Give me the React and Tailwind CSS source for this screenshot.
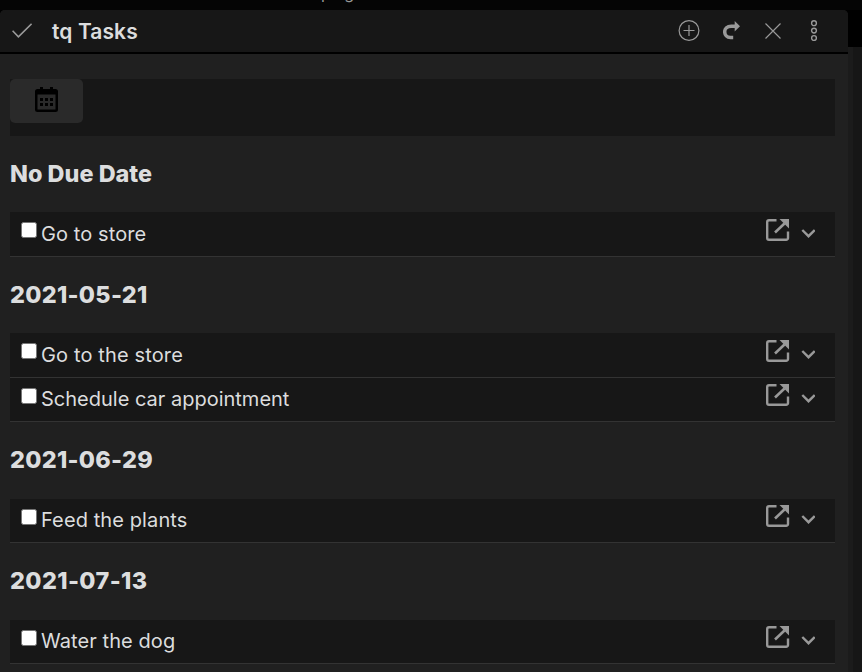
const groups = [
  { title: 'No Due Date', heading: 'h-[76px] tracking-[0.03px]', tasks: [{ name: 'Go to store', tall: true, tracking: 'tracking-[0.1px]' }] },
  {
    title: '2021-05-21',
    heading: 'h-[76px] tracking-[0.3px]',
    tasks: [
      { name: 'Go to the store', tall: true, tracking: 'tracking-[0.14px]' },
      { name: 'Schedule car appointment', tall: false, tracking: 'tracking-normal' },
    ],
  },
  { title: '2021-06-29', heading: 'h-[77px] tracking-[0.3px]', tasks: [{ name: 'Feed the plants', tall: false, tracking: 'tracking-[0.1px]' }] },
  { title: '2021-07-13', heading: 'h-[77px] tracking-[0.4px]', tasks: [{ name: 'Water the dog', tall: false, tracking: 'tracking-[0.08px]' }] },
];

function CheckIcon() {
  return (
    <svg className="ml-3 h-4 w-5 shrink-0" viewBox="0 0 20 16" fill="none" stroke="#999" strokeWidth="1.6">
      <path d="M0.6 7.8 6.4 13.800 19.6 0.800" />
    </svg>
  );
}

function HeaderActions() {
  return (
    <div className="ml-auto flex items-center text-[#999]">
      <svg className="h-[22px] w-[22px]" viewBox="0 0 22 22" fill="none" stroke="currentColor" strokeWidth="1.2">
        <circle cx="11" cy="10.500" r="9.9" />
        <path d="M11 5v11M5.500 10.500h11" />
      </svg>
      <svg className="ml-[23px] h-5 w-[18px]" viewBox="0 0 18 20" fill="none">
        <path d="M12 5.200H8.200C4.200 5.200 1.700 7.400 1.700 10.700c0 3.300 2.200 5.800 5.800 5.800h2.700" stroke="currentColor" strokeWidth="3.500" />
        <path d="M11.700 0v10.400l5.300-5.200z" fill="currentColor" />
      </svg>
      <svg className="ml-6 h-4 w-4" viewBox="0 0 16 16" fill="none" stroke="currentColor" strokeWidth="1.2">
        <path d="M0.500 0.500l15 15M15.500 0.500l-15 15" />
      </svg>
      <svg className="mr-[30px] ml-[29px] h-[22px] w-2" viewBox="0 0 8 22" fill="none" stroke="currentColor" strokeWidth="1.400">
        <circle cx="4" cy="3.200" r="2.400" />
        <circle cx="4" cy="10.600" r="2.400" />
        <circle cx="4" cy="18" r="2.400" />
      </svg>
    </div>
  );
}

function CalendarIcon() {
  return (
    <svg className="h-[25px] w-[23px]" viewBox="0 0 23 25" fill="#000">
      <path
        fillRule="evenodd"
        d="M5 0h3v2h7V0h3v2h2.500A2.500 2.500 0 0 1 23 4.500v18A2.500 2.500 0 0 1 20.500 25h-18A2.500 2.500 0 0 1 0 22.500v-18A2.500 2.500 0 0 1 2.500 2H5zM2.500 7.500v15h18v-15z"
      />
      <path d="M5 11h3v3H5zM10 11h3v3h-3zM15 11h3v3h-3zM5 16h3v3H5zM10 16h3v3h-3zM15 16h3v3h-3z" />
    </svg>
  );
}

function Task({ name, tall, tracking }) {
  return (
    <li className={'flex border-b border-[#333] bg-[#171717] pl-[11px] ' + (tall ? 'h-[45px]' : 'h-[44px]')}>
      <span className="mt-[10px] h-4 w-4 shrink-0 rounded-[2.5px] border border-[#767676] bg-white" />
      <span className={'ml-1 text-[20px] text-[#dcddde] ' + tracking + (tall ? ' leading-[44px]' : ' leading-[42px]')}>{name}</span>
      <svg className={'ml-auto h-[23px] w-6 text-[#999] ' + (tall ? 'mt-[7px]' : 'mt-[6px]')} viewBox="0 0 24 23" fill="none">
        <path d="M10.500 1.200H3A1.800 1.800 0 0 0 1.200 3v16A1.800 1.800 0 0 0 3 20.800h17.200A1.800 1.800 0 0 0 22 19V12.500" stroke="currentColor" strokeWidth="2.400" />
        <path d="M9 13.500 18.500 4.500" stroke="currentColor" strokeWidth="2.600" />
        <path d="M13.500 0H23v9.500z" fill="currentColor" />
      </svg>
      <svg className={'mr-5 ml-[11px] h-[9px] w-[14px] ' + (tall ? 'mt-[17px]' : 'mt-4')} viewBox="0 0 14 9" fill="none" stroke="#999" strokeWidth="2.400">
        <path d="M1.300 1 7.500 7.200 13.700 1" />
      </svg>
    </li>
  );
}

export default function App() {
  return (
    <div className="flex h-[672px] w-[862px] flex-col overflow-hidden bg-[#050505] font-['Inter',sans-serif]">
      <div className="h-[10px] shrink-0 overflow-hidden pl-[321px] text-base text-[#999]">
        <span className="-mt-[17px] block leading-5">plug</span>
      </div>
      <div className="flex min-h-0 flex-1 bg-black">
        <main className="flex w-[848px] flex-col overflow-hidden rounded-t-[5px] bg-[#202020]">
          <header className="flex h-11 shrink-0 items-center border-b-2 border-black bg-[#171717]">
            <CheckIcon />
            <h1 className="ml-[20px] text-[21px] leading-[31px] font-semibold tracking-[0.1px] text-[#dcddde]">tq Tasks</h1>
            <HeaderActions />
          </header>
          <div className="mt-[25px] mr-[13px] ml-[10px]">
            <div className="h-[57px] bg-[#171717]">
              <button className="flex h-11 w-[73px] justify-center rounded-[5px] bg-[#2a2a2a] pt-2">
                <CalendarIcon />
              </button>
            </div>
            {groups.map((g) => (
              <section key={g.title}>
                <h2 className={'text-[23.400px] leading-[76px] font-extrabold text-[#dcddde] ' + g.heading}>{g.title}</h2>
                <ul>
                  {g.tasks.map((t) => (
                    <Task key={t.name} {...t} />
                  ))}
                </ul>
              </section>
            ))}
          </div>
        </main>
        <aside className="mt-[37px] flex-1 border-l-[5px] border-[#1b1b1b] bg-[#161616]" />
      </div>
    </div>
  );
}
